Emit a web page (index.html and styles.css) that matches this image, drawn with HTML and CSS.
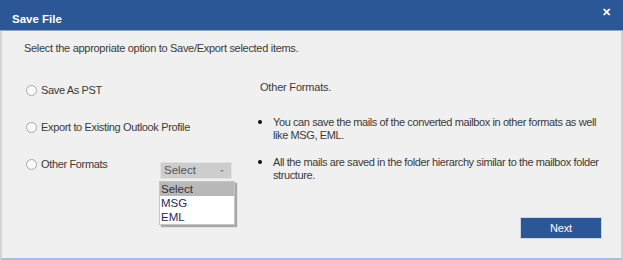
FILE: index.html
```html
<!DOCTYPE html>
<html lang="en">
<head>
  <meta charset="UTF-8">
  <title>Save File</title>
  <link rel="stylesheet" href="styles.css">
</head>
<body>
  <div class="dialog">
    <div class="titlebar">
      <span class="title">Save File</span>
      <span class="close">&#x2715;</span>
    </div>
    <div class="content">
      <p class="intro">Select the appropriate option to Save/Export selected items.</p>
      <div class="columns">
        <div class="options">
          <label class="option"><span class="radio"></span>Save As PST</label>
          <label class="option"><span class="radio"></span>Export to Existing Outlook Profile</label>
          <div class="option other">
            <label class="other-label"><span class="radio"></span>Other Formats</label>
            <div class="combo">
              <div class="combo-box">Select<span class="arrow"></span></div>
              <ul class="combo-list">
                <li class="active">Select</li>
                <li>MSG</li>
                <li>EML</li>
              </ul>
            </div>
          </div>
        </div>
        <div class="info">
          <p class="info-title">Other Formats.</p>
          <ul class="bullets">
            <li>You can save the mails of the converted mailbox in other formats as well like MSG, EML.</li>
            <li>All the mails are saved in the folder hierarchy similar to the mailbox folder structure.</li>
          </ul>
        </div>
      </div>
    </div>
    <div class="footer">
      <button class="next">Next</button>
    </div>
  </div>
</body>
</html>
```

FILE: styles.css
```css
body {
  margin: 0;
  font-family: "Liberation Sans", Arial, sans-serif;
  font-size: 11px;
  color: #3a3a3a;
}
.dialog {
  width: 623px;
  height: 260px;
  box-sizing: border-box;
  display: flex;
  flex-direction: column;
  background-color: #f0f0f0;
  border-left: 2px solid #d4d4d4;
  border-right: 2px solid #d4d4d4;
  border-bottom: 2px solid #9ec0e4;
}
.titlebar {
  height: 30px;
  margin: 0 -2px;
  padding: 0 12px 0 12px;
  display: flex;
  justify-content: space-between;
  background-color: #2b5797;
  color: white;
  border-bottom: 1px solid #8aa6cf;
}
.title {
  font-weight: bold;
  font-size: 11.5px;
  padding-top: 13px;
}
.close {
  font-size: 11px;
  font-weight: bold;
  padding-top: 6px;
}
.content {
  padding: 10px 0 0 22px;
}
.intro {
  margin: 0;
  line-height: 14px;
  letter-spacing: -0.3px;
}
.columns {
  display: flex;
  margin-top: 25px;
}
.options {
  width: 236px;
  display: flex;
  flex-direction: column;
  gap: 17px;
}
.option {
  height: 20px;
  display: flex;
  align-items: center;
  letter-spacing: -0.35px;
}
.radio {
  width: 9px;
  height: 9px;
  margin: 0 4px 0 2px;
  border: 1px solid #a8a8a8;
  border-radius: 50%;
  background-color: #fafafa;
}
.other {
  align-items: flex-start;
}
.other-label {
  height: 20px;
  width: 136px;
  display: flex;
  align-items: center;
}
.combo {
  position: relative;
  margin-top: 8px;
}
.combo-box {
  width: 72px;
  height: 17px;
  box-sizing: border-box;
  padding-left: 3px;
  line-height: 15px;
  font-size: 11.5px;
  color: #555;
  background-color: #cdcdcd;
  border: 1px solid #e2e2e2;
  position: relative;
  letter-spacing: 0;
}
.arrow {
  position: absolute;
  right: 7px;
  top: 7px;
  border-left: 2px solid transparent;
  border-right: 2px solid transparent;
  border-top: 2px solid #888;
}
.combo-list {
  position: absolute;
  left: -1px;
  top: 19px;
  width: 74px;
  margin: 0;
  padding: 0;
  list-style: none;
  background-color: white;
  border: 1px solid #c4c4c4;
  box-shadow: 2px 2px 1px #a8a8a8;
  font-size: 11.5px;
  color: #2a2a5a;
  letter-spacing: 0;
}
.combo-list li {
  height: 14px;
  line-height: 14px;
  padding-left: 1px;
}
.combo-list li.active {
  background-color: #b8b8b8;
  color: #333;
}
.info {
  flex: 1;
}
.info-title {
  margin: 0;
  line-height: 14px;
  letter-spacing: -0.2px;
}
.bullets {
  margin: 21px 0 0 0;
  padding: 0 12px 0 13px;
  letter-spacing: -0.4px;
}
.bullets li {
  line-height: 13px;
  margin-bottom: 13px;
  padding-left: 0;
}
.bullets li::marker {
  font-size: 13px;
  color: #111;
}
.footer {
  margin-top: auto;
  padding: 0 19px 19px 0;
  display: flex;
  justify-content: flex-end;
}
.next {
  width: 82px;
  height: 22px;
  font-family: inherit;
  font-size: 11px;
  color: white;
  background-color: #2b5797;
  border: 1px solid #c8d3e4;
  letter-spacing: -0.2px;
}
```
